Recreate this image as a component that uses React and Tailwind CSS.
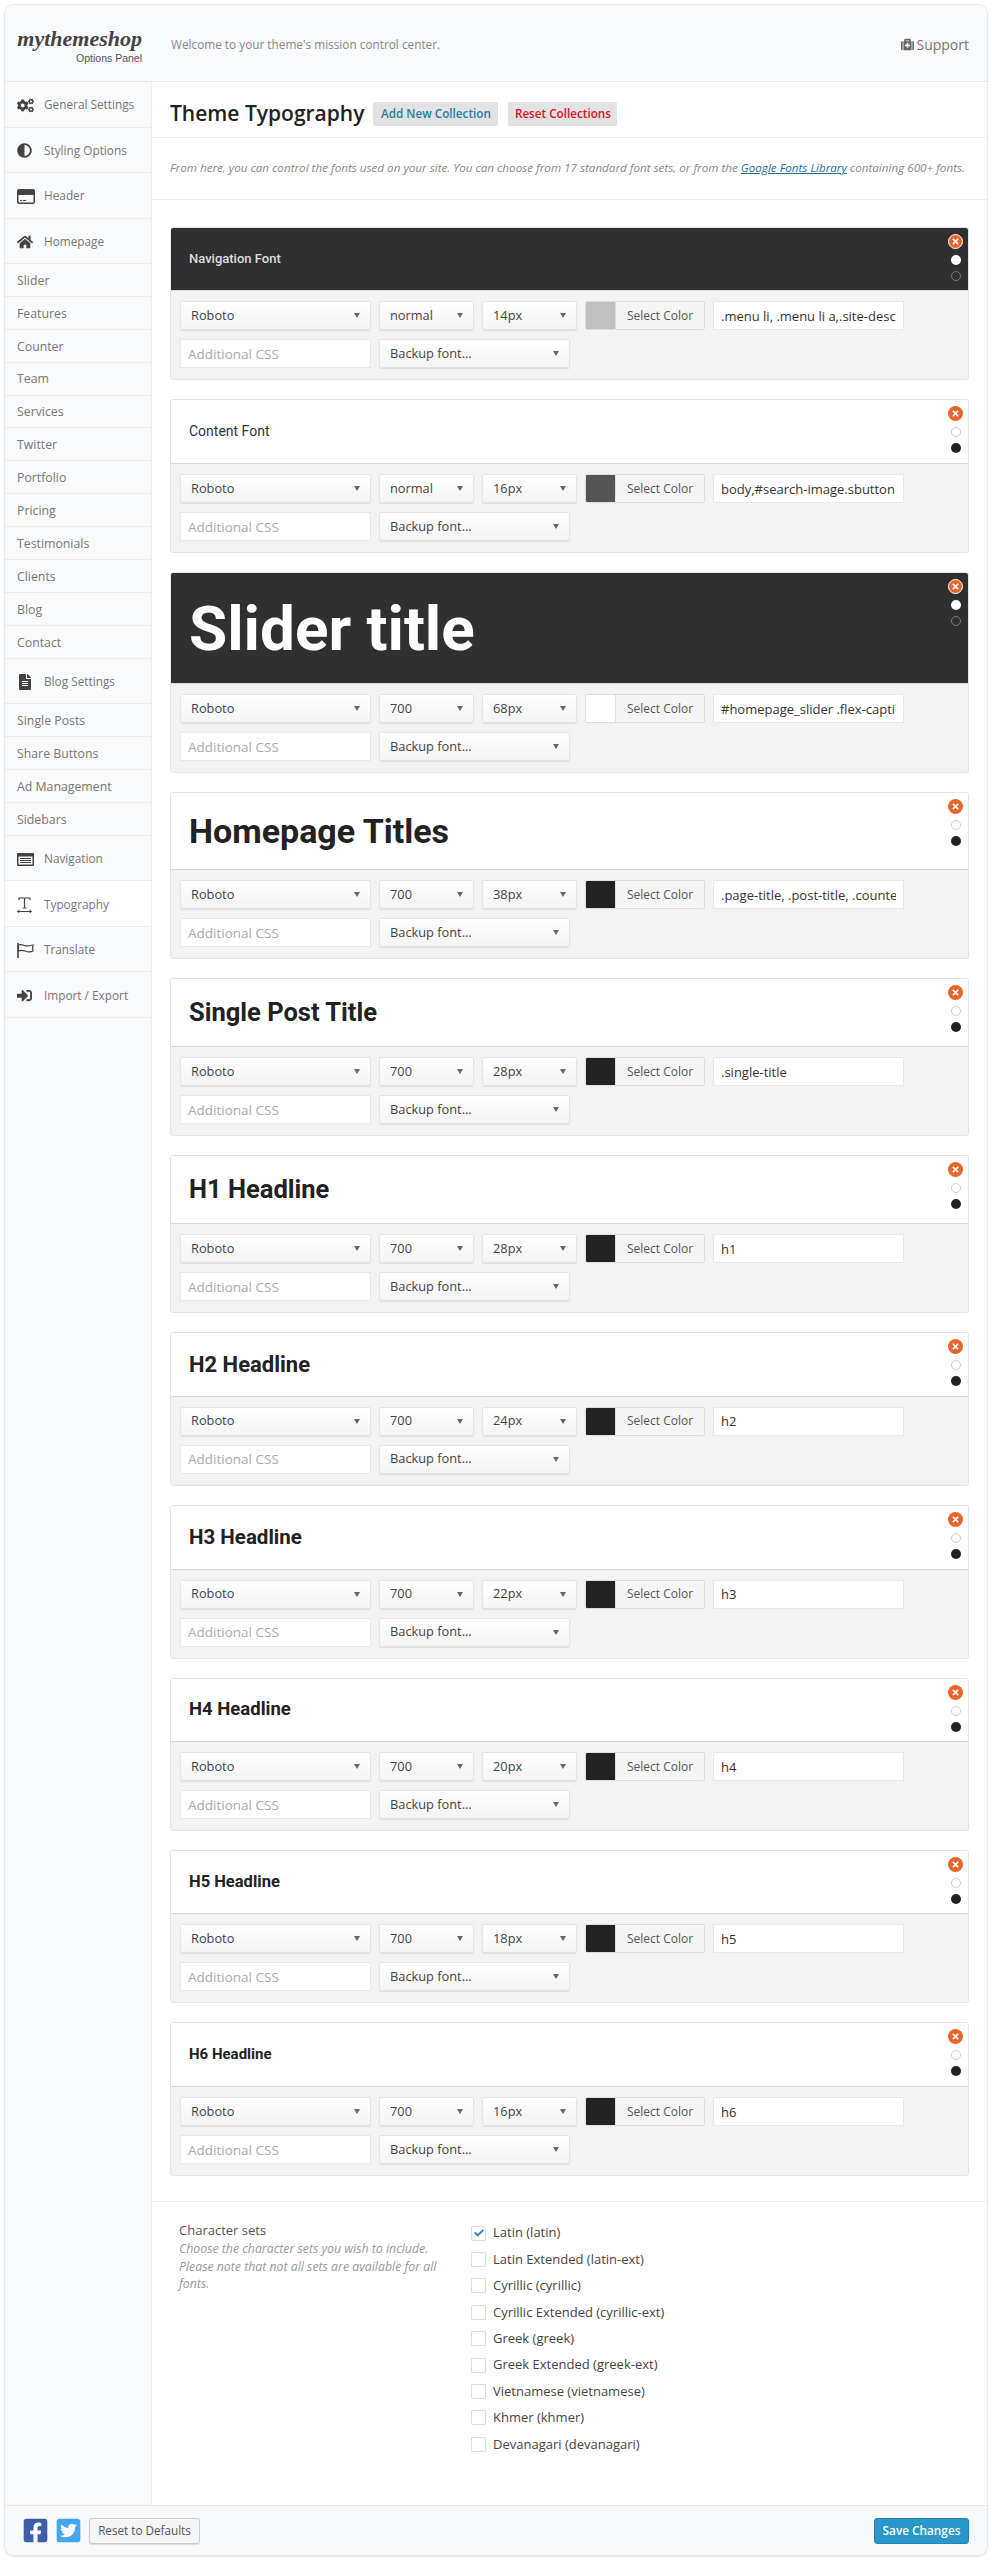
import React from "react";
import { FaCogs, FaAdjust, FaHome, FaFileAlt, FaSignInAlt, FaMedkit, FaFacebookSquare, FaTwitterSquare, FaCheck, FaTimes } from "react-icons/fa";

const CardIcon = () => (
  <svg width="18" height="15" viewBox="0 0 18 15" fill="#444">
    <path d="M2 0h14a2 2 0 0 1 2 2v11a2 2 0 0 1-2 2H2a2 2 0 0 1-2-2V2a2 2 0 0 1 2-2zm-.5 6v7c0 .3.2.5.5.5h14c.3 0 .5-.2.5-.5V6z" />
    <rect x="3" y="11" width="2" height="1" />
    <rect x="6" y="11" width="3" height="1" />
  </svg>
);

const NavIcon = () => (
  <svg width="17" height="13" viewBox="0 0 17 13" fill="#444">
    <path d="M1 0h15a1 1 0 0 1 1 1v11a1 1 0 0 1-1 1H1a1 1 0 0 1-1-1V1a1 1 0 0 1 1-1zm.5 3.500v8h14v-8z" />
    <rect x="3" y="5" width="11" height="1" />
    <rect x="3" y="7" width="11" height="1" />
    <rect x="3" y="9" width="11" height="1" />
  </svg>
);

const TypeIcon = () => (
  <svg width="15" height="16" viewBox="0 0 15 16" fill="none" stroke="#444" strokeWidth="1.2">
    <path d="M2 3V1h11v2M7.500 1v10M5.500 11h4" />
    <path d="M0.500 14.500h14M2.500 13l-2 1.500 2 1.500M12.500 13l2 1.500-2 1.500" strokeWidth="1" />
  </svg>
);

const FlagIcon = () => (
  <svg width="17" height="15" viewBox="0 0 17 15" fill="none" stroke="#444" strokeWidth="1.2">
    <path d="M1 0v15" strokeWidth="1.600" />
    <path d="M1.500 2c2-1 3.500-.5 6 .5s5 .5 8.500-.5c-.5 2-.5 4 0 6-3 1.500-5.500 1-8 0s-4.500-1-6.500 0z" />
  </svg>
);

const sidebarItems = [
  { label: "General Settings", icon: <FaCogs size={17} color="#444" /> },
  { label: "Styling Options", icon: <FaAdjust size={15} color="#444" /> },
  { label: "Header", icon: <CardIcon /> },
  { label: "Homepage", icon: <FaHome size={16} color="#444" /> },
  { label: "Slider" },
  { label: "Features" },
  { label: "Counter" },
  { label: "Team" },
  { label: "Services" },
  { label: "Twitter" },
  { label: "Portfolio" },
  { label: "Pricing" },
  { label: "Testimonials" },
  { label: "Clients" },
  { label: "Blog" },
  { label: "Contact" },
  { label: "Blog Settings", icon: <FaFileAlt size={16} color="#444" /> },
  { label: "Single Posts" },
  { label: "Share Buttons" },
  { label: "Ad Management" },
  { label: "Sidebars" },
  { label: "Navigation", icon: <NavIcon /> },
  { label: "Typography", icon: <TypeIcon />, active: true },
  { label: "Translate", icon: <FlagIcon /> },
  { label: "Import / Export", icon: <FaSignInAlt size={15} color="#444" /> },
];

const fontCards = [
  { title: "Navigation Font", cls: "text-[13px] font-medium text-[#ddd]", head: "h-[62px]", dark: true, weight: "normal", size: "14px", swatch: "bg-[#c0c0c0]", sel: ".menu li, .menu li a,.site-description" },
  { title: "Content Font", cls: "text-[14px] font-normal text-[#333]", head: "h-[63px]", weight: "normal", size: "16px", swatch: "bg-[#555]", sel: "body,#search-image.sbutton" },
  { title: "Slider title", cls: "text-[62px] font-bold text-white", head: "h-[110px]", dark: true, weight: "700", size: "68px", swatch: "bg-white", sel: "#homepage_slider .flex-caption" },
  { title: "Homepage Titles", cls: "text-[34px] font-bold text-[#222]", head: "h-[76px]", weight: "700", size: "38px", swatch: "bg-[#222]", sel: ".page-title, .post-title, .counter" },
  { title: "Single Post Title", cls: "text-[25.5px] font-bold text-[#222]", head: "h-[67px]", weight: "700", size: "28px", swatch: "bg-[#222]", sel: ".single-title" },
  { title: "H1 Headline", cls: "text-[25.5px] font-bold text-[#222]", head: "h-[67px]", weight: "700", size: "28px", swatch: "bg-[#222]", sel: "h1" },
  { title: "H2 Headline", cls: "text-[22px] font-bold text-[#222]", head: "h-[62.5px]", weight: "700", size: "24px", swatch: "bg-[#222]", sel: "h2" },
  { title: "H3 Headline", cls: "text-[20.5px] font-bold text-[#222]", head: "h-[63px]", weight: "700", size: "22px", swatch: "bg-[#222]", sel: "h3" },
  { title: "H4 Headline", cls: "text-[18.5px] font-bold text-[#222]", head: "h-[62.5px]", weight: "700", size: "20px", swatch: "bg-[#222]", sel: "h4" },
  { title: "H5 Headline", cls: "text-[16.5px] font-bold text-[#222]", head: "h-[62px]", weight: "700", size: "18px", swatch: "bg-[#222]", sel: "h5" },
  { title: "H6 Headline", cls: "text-[15px] font-bold text-[#222]", head: "h-[63px]", weight: "700", size: "16px", swatch: "bg-[#222]", sel: "h6" },
];

const charsets = [
  "Latin (latin)",
  "Latin Extended (latin-ext)",
  "Cyrillic (cyrillic)",
  "Cyrillic Extended (cyrillic-ext)",
  "Greek (greek)",
  "Greek Extended (greek-ext)",
  "Vietnamese (vietnamese)",
  "Khmer (khmer)",
  "Devanagari (devanagari)",
];

const Select = ({ label, width }) => (
  <div className={`${width} h-[29px] flex items-center justify-between pl-[10px] pr-[10px] rounded-[2px] border border-[#e4e4e4] bg-gradient-to-b from-white to-[#f4f4f4] shadow-[0_1px_1px_rgba(0,0,0,0.08)] text-[12.8px] text-[#444]`}>
    <span>{label}</span>
    <span className="w-0 h-0 border-x-[3px] border-x-transparent border-t-[5px] border-t-[#666]" />
  </div>
);

const FontCard = ({ card }) => (
  <div className="rounded-[3px] border border-[#e4e4e4] overflow-hidden">
    <div className={`relative ${card.head} flex items-center pl-[18px] font-['Roboto',sans-serif] ${card.dark ? "bg-[#303030]" : "bg-white"} ${card.cls}`}>
      {card.title}
      <div className="absolute top-[6px] right-[5px] flex flex-col items-center">
        <span className={`w-[15px] h-[15px] rounded-full bg-[#e8662a] flex items-center justify-center ${card.dark ? "border border-white" : ""}`}>
          <FaTimes size={9} color="#fff" />
        </span>
        <span className={`mt-[6px] w-[10px] h-[10px] rounded-full ${card.dark ? "bg-white" : "bg-white border border-[#ccc]"}`} />
        <span className={`mt-[6px] w-[10px] h-[10px] rounded-full ${card.dark ? "border border-[#777]" : "bg-[#222]"}`} />
      </div>
    </div>
    <div className="h-[89px] bg-[#f3f3f3] border-t border-[#d8d8d8] pt-[10px] pl-[9px] flex flex-col gap-[9px]">
      <div className="flex gap-[8px]">
        <Select label="Roboto" width="w-[191px]" />
        <Select label={card.weight} width="w-[95px]" />
        <Select label={card.size} width="w-[95px]" />
        <div className="w-[120px] h-[29px] flex rounded-[2px] border border-[#ddd] overflow-hidden">
          <span className={`w-[29px] ${card.swatch}`} />
          <span className="flex-1 flex items-center justify-center bg-[#f5f5f5] text-[12px] text-[#555] border-l border-[#ddd]">Select Color</span>
        </div>
        <input readOnly value={card.sel} className="w-[191px] h-[29px] px-[7px] bg-white border border-[#e8e8e8] text-[13px] text-[#333] outline-none" />
      </div>
      <div className="flex gap-[8px]">
        <input readOnly placeholder="Additional CSS" className="w-[191px] h-[29px] px-[7px] bg-white border border-[#e8e8e8] text-[13.5px] placeholder:text-[#aaa] outline-none" />
        <Select label="Backup font..." width="w-[191px]" />
      </div>
    </div>
  </div>
);

export default function App() {
  return (
    <div className="p-[4px] bg-white font-['Open_Sans',sans-serif]">
      <div className="h-[2552px] flex flex-col rounded-[10px] border border-[#e8e8e8] shadow-[0_1px_2px_rgba(0,0,0,0.1)] overflow-hidden">
        <header className="h-[77px] shrink-0 flex items-center bg-[#f9fafc] border-b border-[#e8e8e8]">
          <div className="w-[147px] shrink-0 pr-[10px] pt-[3px] flex flex-col items-end">
            <span className="font-['Liberation_Serif',serif] font-bold italic text-[22px] leading-[26px] text-[#444]">mythemeshop</span>
            <span className="font-['Liberation_Sans',sans-serif] text-[10.5px] leading-[12px] text-[#555]">Options Panel</span>
          </div>
          <span className="ml-[19px] pt-[3px] text-[11.8px] text-[#888]">Welcome to your theme's mission control center.</span>
          <span className="ml-auto mr-[18px] pt-[3px] flex items-center gap-[2px] text-[14px] text-[#777]">
            <FaMedkit size={13} color="#666" /> Support
          </span>
        </header>

        <div className="flex-1 flex min-h-0">
          <aside className="w-[147px] shrink-0 bg-[#f9fafc] border-r border-[#eee]">
            {sidebarItems.map((item) =>
              item.icon ? (
                <div key={item.label} className={`h-[45.5px] pt-[2px] flex items-center border-b border-[#ececec] text-[11.8px] text-[#777] ${item.active ? "bg-white" : ""}`}>
                  <span className="w-[39px] pl-[12px] shrink-0 flex items-center">{item.icon}</span>
                  {item.label}
                </div>
              ) : (
                <div key={item.label} className="h-[32.9px] pt-[2px] flex items-center pl-[12px] border-b border-[#ececec] text-[12.3px] text-[#777]">
                  {item.label}
                </div>
              )
            )}
          </aside>

          <main className="flex-1 min-w-0 flex flex-col">
            <div className="h-[56px] shrink-0 flex items-center pl-[18px] pt-[8px] border-b border-[#eee]">
              <h1 className="text-[21px] font-semibold text-[#222]">Theme Typography</h1>
              <button className="ml-[9px] w-[125px] h-[24px] rounded-[2px] bg-[#e2e2e2] text-[11.7px] font-semibold text-[#2b7ca8]">Add New Collection</button>
              <button className="ml-[10px] w-[109px] h-[24px] rounded-[2px] bg-[#e2e2e2] text-[11.7px] font-semibold text-[#e0101e]">Reset Collections</button>
            </div>
            <div className="h-[62px] shrink-0 flex items-center pl-[18px] pb-[2px] border-b border-[#eee] text-[11.66px] italic text-[#888] whitespace-nowrap">
              <span>
                From here, you can control the fonts used on your site. You can choose from 17 standard font sets, or from the{" "}
                <a href="#" className="underline text-[#1c6f96]">Google Fonts Library</a> containing 600+ fonts.
              </span>
            </div>

            <div className="h-[2002px] shrink-0 pt-[27px] pl-[18px] pr-[18px] flex flex-col gap-[19px] border-b border-[#eee]">
              {fontCards.map((card) => (
                <FontCard key={card.title} card={card} />
              ))}
            </div>

            <div className="flex-1 flex pt-[18px] pl-[27px]">
              <div className="w-[292px] shrink-0 pr-[30px]">
                <div className="text-[13px] leading-[20px] text-[#555]">Character sets</div>
                <p className="text-[12.3px] leading-[17.5px] italic text-[#999]">
                  Choose the character sets you wish to include. Please note that not all sets are available for all fonts.
                </p>
              </div>
              <div className="flex flex-col">
                {charsets.map((name, i) => (
                  <label key={name} className="h-[26.4px] flex items-center gap-[7px] text-[13px] text-[#444]">
                    <span className="w-[15px] h-[15px] flex items-center justify-center bg-white border border-[#ddd] rounded-[1px]">
                      {i === 0 && <FaCheck size={10} color="#1e8cbe" />}
                    </span>
                    {name}
                  </label>
                ))}
              </div>
            </div>
          </main>
        </div>

        <footer className="h-[50px] shrink-0 flex items-center bg-[#f8f9fb] border-t border-[#e8e8e8] pl-[16.5px] pr-[18px]">
          <FaFacebookSquare size={27} color="#3f5ea8" />
          <FaTwitterSquare size={27} color="#45a5ee" className="ml-[6px]" />
          <button className="ml-[7.5px] w-[111px] h-[26px] rounded-[3px] border border-[#ccc] bg-[#f5f5f5] text-[11.7px] text-[#555] shadow-[0_1px_1px_rgba(0,0,0,0.1)]">Reset to Defaults</button>
          <button className="ml-auto w-[95px] h-[26px] rounded-[3px] bg-[#2b96c8] border border-[#1f86b8] text-[11.8px] font-semibold text-white">Save Changes</button>
        </footer>
      </div>
    </div>
  );
}
